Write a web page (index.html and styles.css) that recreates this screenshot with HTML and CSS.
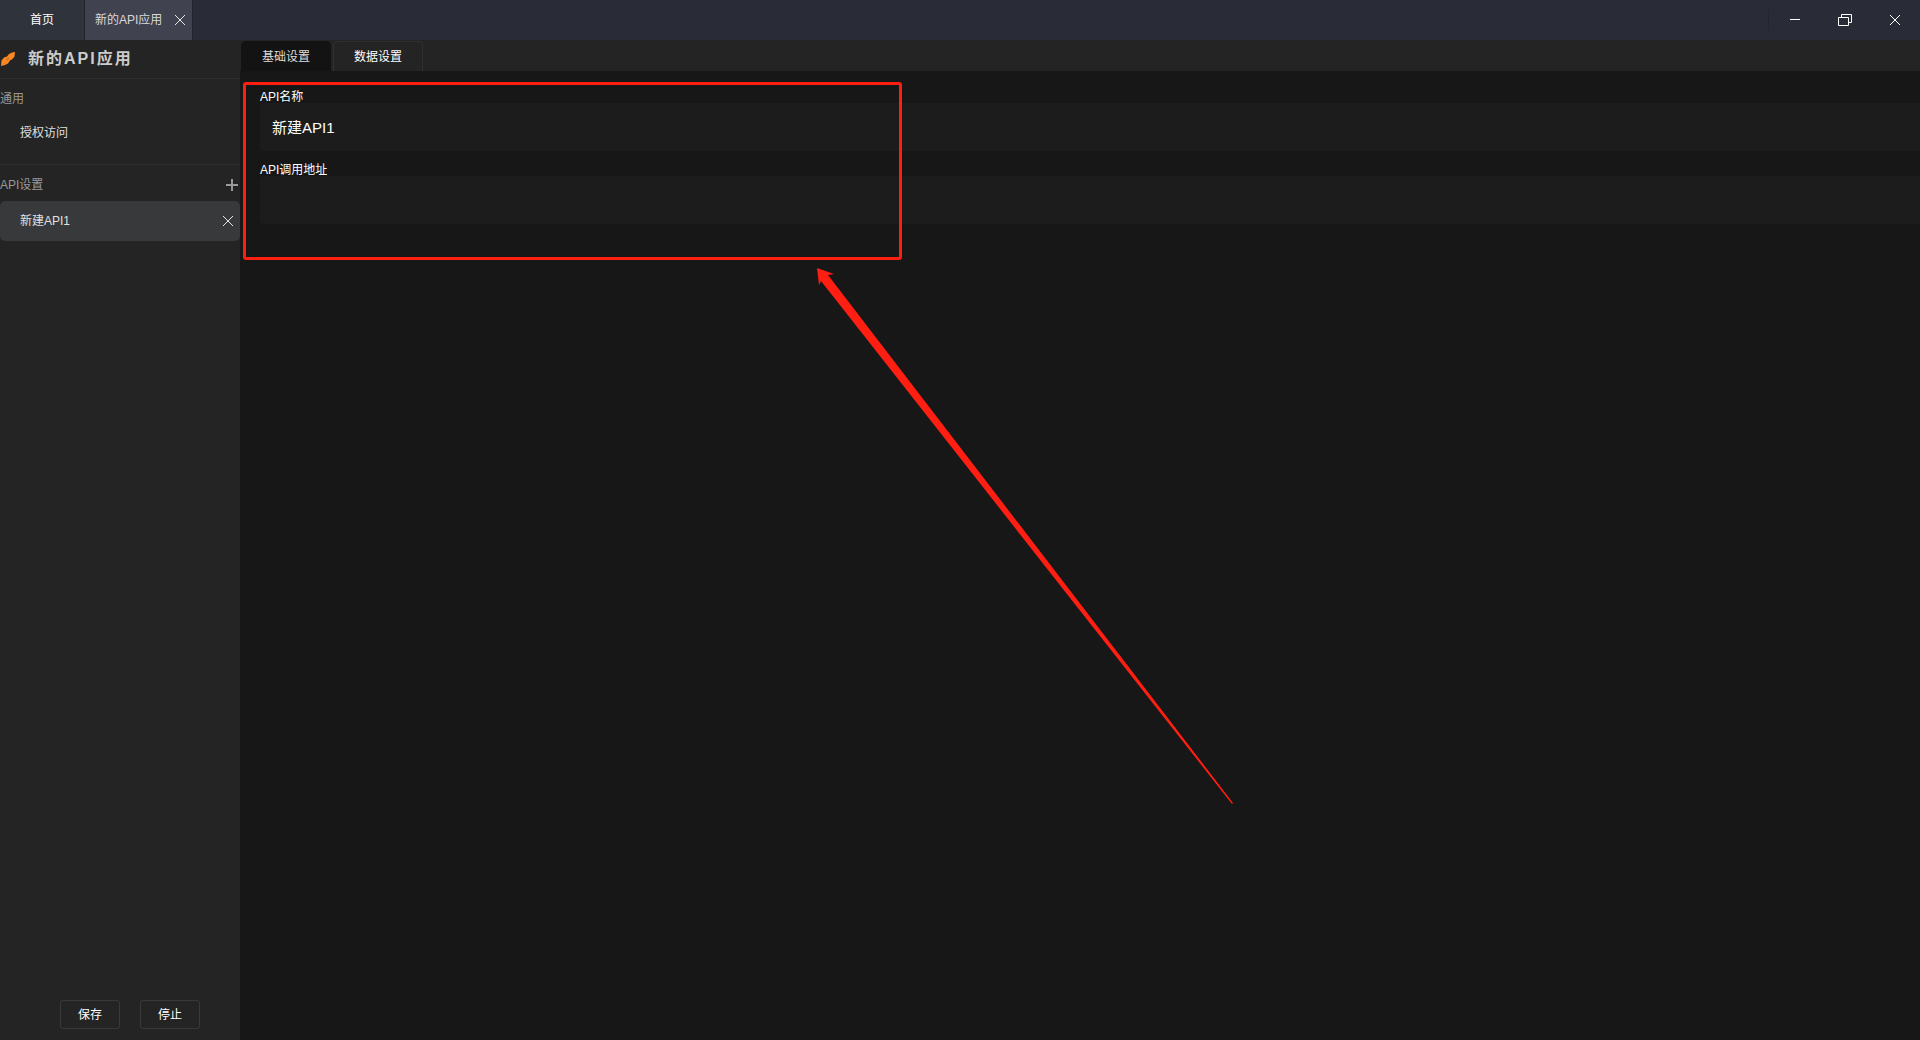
FILE: index.html
```
<!DOCTYPE html>
<html lang="zh-CN">
<head>
    <meta charset="UTF-8">
    <meta name="viewport" content="width=device-width, initial-scale=1.0">
    <title>新的API应用</title>
    <link rel="stylesheet" href="styles.css">
</head>
<body>
    <!-- Title bar -->
    <header class="titlebar">
        <nav class="window-tabs">
            <a href="#" class="window-tab home">首页</a>
            <div class="window-tab active">
                <a href="#">新的API应用</a>
                <button class="icon-button" aria-label="关闭标签">
                    <svg width="12" height="12" viewBox="0 0 12 12"><path d="M1 1L11 11M11 1L1 11"/></svg>
                </button>
            </div>
        </nav>
        <div class="window-controls">
            <button class="control" aria-label="最小化">
                <svg width="14" height="14" viewBox="0 0 14 14"><path d="M2 6.500H12"/></svg>
            </button>
            <button class="control" aria-label="还原">
                <svg width="14" height="14" viewBox="0 0 14 14"><path d="M.5 4.500H10.500V12.500H.5ZM3.500 4.500V1.500H13.500V9.500H10.500"/></svg>
            </button>
            <button class="control" aria-label="关闭">
                <svg width="14" height="14" viewBox="0 0 14 14"><path d="M2 2L12 12M12 2L2 12"/></svg>
            </button>
        </div>
    </header>

    <div class="workspace">
        <!-- Sidebar -->
        <aside class="sidebar">
            <div class="app-title">
                <svg class="app-logo" width="16" height="16" viewBox="0 0 16 16">
                    <path d="M1 15L1.500 9.500L4 6.500L7 5.500L9 3L12 1.500L15 1L14.500 5.500L12.500 8L10 9.500L8 12.500L5 14Z" fill="#fa8722"/>
                    <path d="M6.500 9L9 7" stroke="#9a5a24"/>
                </svg>
                <h1>新的API应用</h1>
            </div>
            <section class="group general">
                <h2>通用</h2>
                <a href="#" class="item">授权访问</a>
            </section>
            <section class="group">
                <div class="group-header">
                    <h2>API设置</h2>
                    <button class="icon-button add" aria-label="添加API">
                        <svg width="14" height="14" viewBox="0 0 14 14"><path d="M7 1V13M1 7H13" stroke-width="2"/></svg>
                    </button>
                </div>
                <div class="item selected">
                    <a href="#">新建API1</a>
                    <button class="icon-button" aria-label="删除API">
                        <svg width="12" height="12" viewBox="0 0 12 12"><path d="M1 1L11 11M11 1L1 11"/></svg>
                    </button>
                </div>
            </section>
            <div class="actions">
                <button class="action">保存</button>
                <button class="action">停止</button>
            </div>
        </aside>

        <!-- Main Content -->
        <main class="content">
            <nav class="tabs">
                <button class="tab current">基础设置</button>
                <button class="tab">数据设置</button>
            </nav>
            <form class="settings">
                <label for="api-name">API名称</label>
                <input id="api-name" type="text" value="新建API1">
                <label for="api-url">API调用地址</label>
                <input id="api-url" type="text">
            </form>
            <!-- Highlight over the form -->
            <div class="highlight"></div>
            <svg class="arrow" width="416" height="536" viewBox="0 0 416 536">
                <path d="M0 0L17 6L11 7L416 535L415 536L4 13L2 17Z" fill="#ff1e12"/>
            </svg>
        </main>
    </div>
</body>
</html>
```

FILE: styles.css
```
* {
    margin: 0;
    padding: 0;
    box-sizing: border-box;
}

body {
    min-height: 100vh;
    display: flex;
    flex-direction: column;
    background: #171717;
    color: #fff;
    font-family: "Liberation Sans", "Noto Sans CJK SC", sans-serif;
    font-size: 12px;
    line-height: 16px;
}

a {
    color: inherit;
    text-decoration: none;
}

button {
    border: none;
    background: none;
    color: inherit;
    font: inherit;
    cursor: pointer;
}

svg {
    display: block;
    fill: none;
    stroke: currentColor;
}

.icon-button {
    display: flex;
    color: #e6e6e6;
}

/* Title bar */
.titlebar {
    display: flex;
    justify-content: space-between;
    height: 40px;
    background: #292c36;
}

.window-tabs {
    display: flex;
}

.window-tab {
    display: flex;
    align-items: center;
    border-right: 1px solid #22242b;
}

.window-tab.home {
    padding: 0 30px;
    background: #2f333c;
}

.window-tab.active {
    gap: 12px;
    padding: 0 6px 0 10px;
    background: #40424f;
    color: #d8d8dc;
}

.window-controls {
    display: flex;
    align-items: center;
}

.control {
    display: flex;
    align-items: center;
    justify-content: center;
    width: 50px;
    height: 20px;
}

.control:first-child {
    width: 52px;
    border-left: 1px solid #24252d;
}

/* Sidebar */
.workspace {
    display: flex;
    flex: 1;
}

.sidebar {
    display: flex;
    flex-direction: column;
    width: 240px;
    background: #242424;
    color: #e0e0e0;
}

.app-title {
    display: flex;
    align-items: center;
    gap: 12px;
    height: 39px;
    border-bottom: 1px solid #303030;
}

.app-logo {
    stroke: none;
}

.app-title h1 {
    color: #ccc;
    font-size: 16px;
    line-height: 20px;
    letter-spacing: 2px;
}

.group h2 {
    color: #999;
    font-size: 12px;
    font-weight: normal;
}

.general {
    height: 86px;
    padding-top: 12px;
    border-bottom: 1px solid #303030;
}

.general h2 {
    margin-bottom: 6px;
}

.group-header {
    display: flex;
    align-items: center;
    justify-content: space-between;
    height: 36px;
    padding: 4px 1px 0 0;
}

.add {
    color: #999;
}

.item {
    display: flex;
    align-items: center;
    justify-content: space-between;
    height: 40px;
    padding: 0 6px 0 20px;
}

.item.selected {
    border-radius: 5px;
    background: #38393b;
}

.actions {
    display: flex;
    justify-content: center;
    gap: 20px;
    margin-top: auto;
    padding: 0 0 11px 20px;
}

.action {
    width: 60px;
    height: 29px;
    border: 1px solid #38393d;
    border-radius: 3px;
    color: #fff;
}

/* Main Content */
.content {
    position: relative;
    flex: 1;
    min-width: 0;
}

.tabs {
    display: flex;
    gap: 2px;
    height: 31px;
    padding: 1px 0 0 1px;
    background: #242424;
}

.tab {
    width: 90px;
    border: 1px solid #303030;
    border-bottom: none;
    border-radius: 5px 5px 0 0;
}

.tab.current {
    border-color: #131313;
    background: #131313;
    color: #ddd;
}

.settings {
    display: flex;
    flex-direction: column;
    padding: 16px 0 0 20px;
}

.settings label {
    padding-top: 4px;
    line-height: 12px;
}

.settings input {
    height: 48px;
    margin-bottom: 9px;
    padding: 0 12px 2px;
    border: none;
    border-radius: 4px 0 0 4px;
    outline: none;
    background: #1c1c1c;
    color: #fff;
    font-family: inherit;
    font-size: 15px;
}

.highlight {
    position: absolute;
    top: 42px;
    left: 3px;
    width: 659px;
    height: 178px;
    border: 3px solid #ff1e12;
    border-radius: 3px;
    pointer-events: none;
}

.arrow {
    position: absolute;
    top: 228px;
    left: 577px;
    stroke: none;
    pointer-events: none;
}
```
